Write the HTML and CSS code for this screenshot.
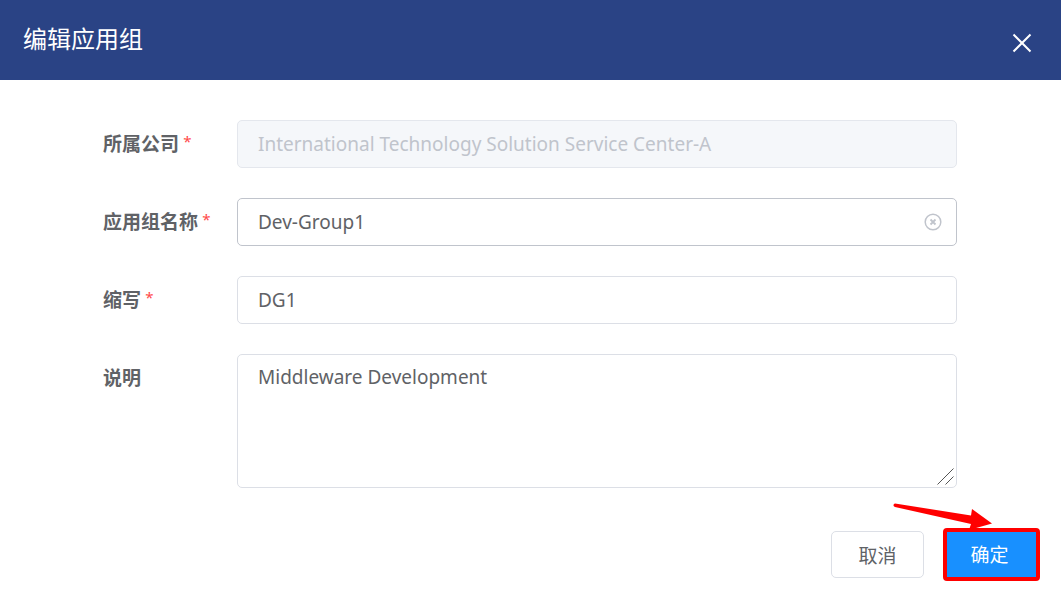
FILE: index.html
```html
<!DOCTYPE html>
<html lang="zh-CN">
<head>
<meta charset="utf-8">
<meta name="viewport" content="width=device-width, initial-scale=1">
<title>编辑应用组</title>
<link rel="stylesheet" href="styles.css">
</head>
<body>
<header class="header">
  <h1 class="title">编辑应用组</h1>
  <button class="close" type="button" aria-label="关闭">
    <svg width="20" height="20" viewBox="0 0 20 20"><path d="M1.5 1.5 18.5 18.5M18.5 1.5 1.5 18.5" fill="none" stroke="#fff" stroke-width="2"/></svg>
  </button>
</header>
<form class="form">
  <div class="fields">
    <div class="row">
      <label class="label" for="company">所属公司 <span class="star">*</span></label>
      <input class="control" id="company" type="text" value="International Technology Solution Service Center-A" disabled>
    </div>
    <div class="row">
      <label class="label" for="name">应用组名称 <span class="star">*</span></label>
      <div class="wrap">
        <input class="control active" id="name" type="text" value="Dev-Group1">
        <button class="clear" type="button" aria-label="清空">
          <svg width="18" height="18" viewBox="0 0 18 18" fill="none" stroke="#c0c4cc"><circle cx="9" cy="9" r="7.8" stroke-width="1.5"/><path d="M6.5 6.5 11.5 11.5M11.5 6.5 6.5 11.5" stroke-width="1.8"/></svg>
        </button>
      </div>
    </div>
    <div class="row">
      <label class="label" for="abbr">缩写 <span class="star">*</span></label>
      <input class="control" id="abbr" type="text" value="DG1">
    </div>
    <div class="row">
      <label class="label" for="desc">说明</label>
      <div class="wrap">
        <textarea class="control area" id="desc">Middleware Development</textarea>
        <svg class="grip" width="17" height="17" viewBox="0 0 17 17"><path d="M.5 16.500 16.500 .5M8.500 16.500 16.500 8.500" fill="none" stroke="#555" stroke-width="1"/></svg>
      </div>
    </div>
  </div>
  <div class="actions">
    <button class="btn" type="button">取消</button>
    <div class="marked">
      <button class="btn primary" type="submit">确定</button>
      <svg class="arrow" width="100" height="28" viewBox="0 0 100 28"><path d="M1 1Q-.5 3 2 4L78 21 76 27 99 20.500 79 6 78 12.500 2 .5Z" fill="#f00"/></svg>
    </div>
  </div>
</form>
</body>
</html>
```
FILE: styles.css
```css
* { box-sizing: border-box; }
body {
  margin: 0;
  background: #fff;
  color: #606266;
  font-family: "Noto Sans", "Noto Sans CJK SC", sans-serif;
  font-size: 19px;
}
button, input, textarea { font: inherit; color: inherit; }
button { cursor: pointer; }
.header {
  display: flex;
  align-items: center;
  justify-content: space-between;
  height: 80px;
  padding: 0 29px 0 23px;
  background: #2a4385;
  color: #fff;
}
.title {
  margin: 0;
  font-family: "Noto Sans CJK SC", sans-serif;
  font-size: 24px;
  font-weight: 400;
  line-height: 32px;
  padding-bottom: 4px;
}
.close {
  display: flex;
  padding: 6px 0 0;
  border: 0;
  background: none;
}
.form { padding-top: 40px; }
.fields {
  display: flex;
  flex-direction: column;
  gap: 30px;
  padding: 0 104px 0 103px;
}
.row {
  display: grid;
  grid-template-columns: 134px 1fr;
  align-items: start;
}
.label {
  font-family: "Noto Sans CJK SC", sans-serif;
  font-weight: 700;
  line-height: 46px;
}
.star {
  color: #ff4949;
  font-family: "Noto Sans", sans-serif;
  font-size: 15px;
  font-weight: 400;
  line-height: 1;
  vertical-align: 4px;
}
.wrap { position: relative; }
.control {
  display: block;
  width: 100%;
  height: 48px;
  padding: 0 20px;
  border: 1px solid #dcdfe6;
  border-radius: 5px;
  background: #fff;
  outline: 0;
}
.control:disabled {
  background: #f5f7fa;
  border-color: #e4e7ed;
  color: #c0c4cc;
}
.active { border-color: #c0c4cc; }
.area {
  height: 134px;
  padding: 8px 20px;
  line-height: 28px;
  resize: none;
}
.clear {
  position: absolute;
  top: 15px;
  right: 15px;
  display: flex;
  padding: 0;
  border: 0;
  background: none;
}
.grip {
  position: absolute;
  right: 3px;
  bottom: 3px;
  pointer-events: none;
}
.actions {
  display: flex;
  justify-content: flex-end;
  gap: 22px;
  padding: 43px 24px 18px;
}
.btn {
  display: block;
  width: 93px;
  height: 47px;
  padding: 0;
  border: 1px solid #dcdfe6;
  border-radius: 5px;
  background: #fff;
  font-family: "Noto Sans CJK SC", sans-serif;
}
.marked { position: relative; }
.primary {
  width: 91px;
  padding: 0 4px 2px 0;
  border: 0;
  border-radius: 1px;
  background: #1890ff;
  color: #fff;
  outline: 4px solid #f00;
  outline-offset: -1px;
}
.arrow {
  position: absolute;
  right: 44px;
  top: -28px;
}
```
